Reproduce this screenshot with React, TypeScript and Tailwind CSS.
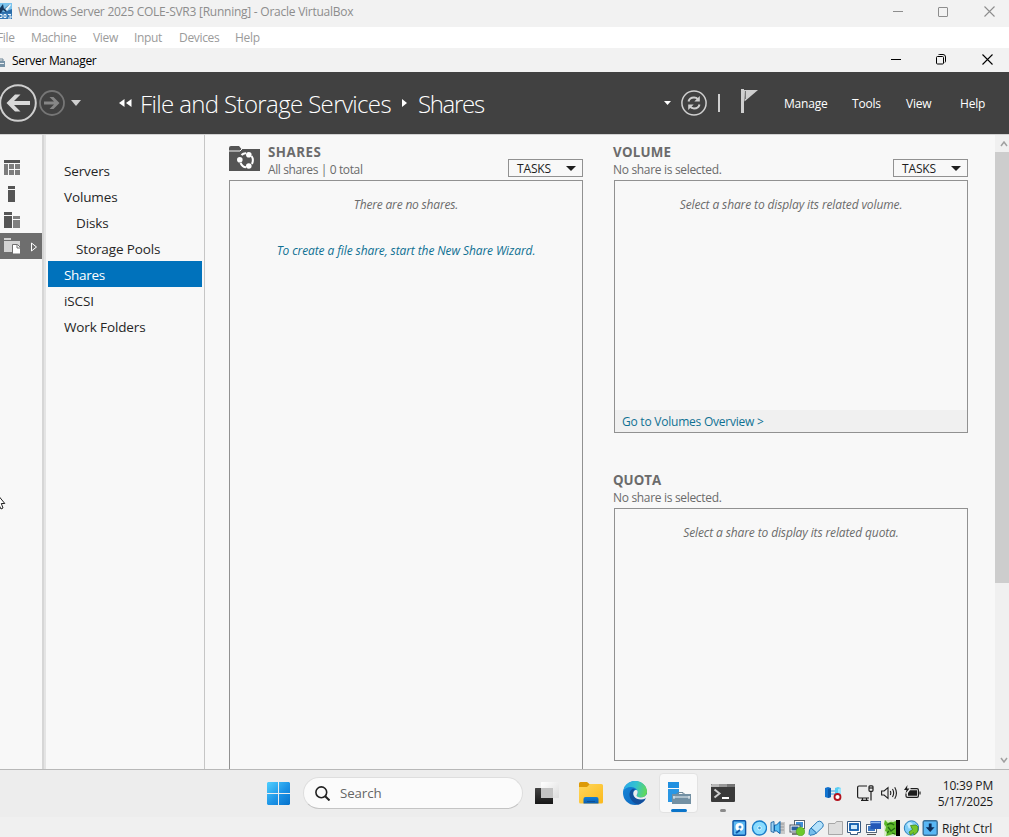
import React from "react";

type TextProps = { className?: string; children: React.ReactNode };

function T({ className = "", children }: TextProps) {
  return <span className={"block whitespace-nowrap " + className}>{children}</span>;
}

function Caret({ className = "" }: { className?: string }) {
  return (
    <svg className={className} viewBox="0 0 10 6" preserveAspectRatio="none" fill="currentColor">
      <path d="M0 0h10L5 6z" />
    </svg>
  );
}

function CloseGlyph() {
  return (
    <svg className="h-[11px] w-[11px]" viewBox="0 0 11 11" fill="none" stroke="currentColor" strokeWidth="1.1">
      <path d="M.5.5l10 10M10.5.5l-10 10" />
    </svg>
  );
}

function HostTitleBar() {
  return (
    <div className="flex h-[27px] items-start bg-[#f2f2f2] text-[#8d8d8d]">
      <svg className="mt-[3px] h-4 w-3 shrink-0" viewBox="0 0 12 16">
        <rect width="12" height="16" fill="#2b6ca8" />
        <path d="M0 0h12v6L4 9 0 8z" fill="#7cc4ee" />
        <path d="M0 5l3-4 1 5 6-5-4 8-3-2-3 4z" fill="#16385f" />
        <path d="M5 6l5-5 1 1-4 6z" fill="#e8f4fb" />
        <rect y="10" width="12" height="6" fill="#3478b5" />
        <path d="M0 11.500h2v3H0M4 11.500h2v3H4zM8 11.500h3M9 13h2v2H8" stroke="#e8f4fb" strokeWidth="1" fill="none" />
      </svg>
      <T className="ml-[6px] mt-[3px] text-[12px] leading-[18px] tracking-[-0.25px]">
        Windows Server 2025 COLE-SVR3 [Running] - Oracle VirtualBox
      </T>
      <div className="ml-auto mt-[6px] flex items-center pr-[14px]">
        <span className="mr-[35px] h-px w-[10px] bg-current" />
        <span className="mr-[36px] h-[10px] w-[10px] rounded-[1px] border border-current" />
        <CloseGlyph />
      </div>
    </div>
  );
}

function HostMenu() {
  return (
    <div className="flex h-[21px] bg-white text-[12px] leading-[22px] tracking-[-0.33px] text-[#9b9b9b]">
      <T className="-ml-[3px] w-[34px]">File</T>
      <T className="w-[62px]">Machine</T>
      <T className="w-[41px]">View</T>
      <T className="w-[45px]">Input</T>
      <T className="w-[56px]">Devices</T>
      <T>Help</T>
    </div>
  );
}

function AppTitleBar() {
  return (
    <div className="flex h-6 items-start bg-[#f2f2f2] text-black">
      <svg className="mt-[10px] h-[9px] w-[5px] shrink-0" viewBox="0 0 5 9">
        <path d="M0 1h3v2H0" fill="none" stroke="#6d8596" />
        <rect y="3" width="5" height="6" fill="#7893a6" />
        <path d="M0 5.500h4" stroke="#e9eef2" />
      </svg>
      <T className="ml-[7px] mt-[4px] text-[12px] leading-[18px] tracking-[-0.3px]">Server Manager</T>
      <div className="ml-auto mt-[6px] flex items-center pr-[16px]">
        <span className="mr-[35px] h-px w-[10px] bg-current" />
        <svg className="mr-[36px] h-[11px] w-[10px]" viewBox="0 0 10 11" fill="none" stroke="currentColor">
          <rect x=".5" y="2.500" width="7" height="7.500" rx="1" />
          <path d="M2.500 1Q2.500.5 3.500.5H7q2.500 0 2.500 2.500v4.500q0 .8-.8.800" />
        </svg>
        <CloseGlyph />
      </div>
    </div>
  );
}

function Header() {
  return (
    <div className="flex h-[63px] items-center border-b border-[#d2d2d2] bg-[#414141] text-white">
      <svg className="h-[40px] w-[38px] shrink-0" viewBox="0 0 38 40" fill="none">
        <circle cx="18" cy="20" r="17.800" stroke="#cfcfcf" strokeWidth="2" />
        <path d="M30 18v4H14l6.500 6.500h-5.500L6.500 20 15 11.500h5.500L14 18z" fill="#d8d8d8" />
      </svg>
      <svg className="ml-[1px] h-[26px] w-[26px] shrink-0" viewBox="0 0 26 26" fill="none">
        <circle cx="13" cy="13" r="12" stroke="#767676" strokeWidth="1.800" />
        <path d="M5 11.500v3h10l-4.500 4.500h4L20.500 13l-6-6h-4l4.500 4.500z" fill="#868686" />
      </svg>
      <Caret className="ml-[6px] h-[6px] w-[10px] text-[#cfcfcf]" />
      <svg className="ml-[38px] h-[8px] w-[13px]" viewBox="0 0 13 8" fill="#fff">
        <path d="M5.500 0v8L0 4zM12.500 0v8L7 4z" />
      </svg>
      <T className="ml-[8px] pt-[2px] text-[24px] font-light leading-[36px] tracking-[-0.63px]">File and Storage Services</T>
      <div className="flex flex-1 items-center">
        <svg className="ml-[11px] h-[8px] w-[5px]" viewBox="0 0 5 8" fill="#fff">
          <path d="M0 0v8l5-4z" />
        </svg>
        <T className="ml-[11px] pt-[2px] text-[24px] font-light leading-[36px] tracking-[-1.3px]">Shares</T>
      </div>
      <Caret className="h-[4px] w-[7px]" />
      <svg className="ml-[10px] h-[26px] w-[26px] shrink-0" viewBox="0 0 26 26" fill="none" stroke="#cfcfcf">
        <circle cx="13" cy="13" r="12.100" strokeWidth="1.500" />
        <path d="M7.500 11.500q1-4 5.500-4 2.500 0 4 1.800M18.500 14.500q-1 4-5.500 4-2.500 0-4-1.800" strokeWidth="2" />
        <path d="M18.800 6v5.500h-5.500zM7.200 20v-5.500h5.500z" fill="#cfcfcf" stroke="none" />
      </svg>
      <span className="ml-[11px] h-[18px] w-[2px] bg-[#cfcfcf]" />
      <svg className="mb-[5px] ml-[21px] h-[24px] w-[17px] shrink-0" viewBox="0 0 17 24" fill="#cfcfcf">
        <path d="M0 0h3v24H0z" />
        <path d="M3 1h14L3.500 12.500z" />
        <path d="M4.500 2v8" stroke="#777" strokeWidth="1" />
      </svg>
      <nav className="ml-[26px] flex pt-[2px] text-[12px] font-medium leading-[18px] tracking-[-0.2px]">
        <T className="w-[68px]">Manage</T>
        <T className="w-[54px]">Tools</T>
        <T className="w-[54px]">View</T>
        <T className="w-[49px]">Help</T>
      </nav>
    </div>
  );
}

function Rail() {
  return (
    <div className="w-[42px] shrink-0 pt-[20px]">
      <div className="flex h-[26px] items-center pb-px pl-[4px]">
        <svg className="h-[15px] w-4" viewBox="0 0 16 15" fill="#7d7d7d">
          <path d="M0 0h16v3H0z" fill="#555" />
          <path d="M0 4h4v11H0zM5 4h5v5H5zM11 4h5v5h-5zM5 10h5v5H5zM11 10h5v5h-5z" />
        </svg>
      </div>
      <div className="flex h-[26px] items-center pl-[8px]">
        <svg className="h-4 w-[7px]" viewBox="0 0 7 16" fill="#555">
          <path d="M0 0h7v3H0zM0 4h7v12H0z" />
        </svg>
      </div>
      <div className="flex h-[26px] items-center pl-[4px]">
        <svg className="h-4 w-4" viewBox="0 0 16 16" fill="#555">
          <path d="M0 0h8v3H0zM0 4h8v12H0z" />
          <path d="M9 4h7v3H9zM9 8h7v8H9z" fill="#808080" />
        </svg>
      </div>
      <div className="flex h-[26px] items-center bg-[#6e6e6e] pl-[4px]">
        <svg className="h-4 w-4" viewBox="0 0 16 16">
          <path d="M0 0h7v2H0zM0 3h16v11H0z" fill="#d3d3d3" />
          <path d="M8.500 6.500h5l3 3V16h-8z" fill="#fff" stroke="#6e6e6e" />
          <path d="M13 7v3h3" fill="none" stroke="#6e6e6e" />
        </svg>
        <svg className="ml-[11px] mt-[1px] h-[10px] w-[6px]" viewBox="0 0 6 10" fill="none" stroke="#fff">
          <path d="M.5 1v8l5-4z" />
        </svg>
      </div>
    </div>
  );
}

function SideNav() {
  return (
    <nav className="w-[159px] shrink-0 border-r border-[#c6c6c6] px-[2px] pt-[22px] text-[13.500px] leading-[28px] tracking-[-0.13px] text-[#262626]">
      <T className="h-[26px] pl-4">Servers</T>
      <T className="h-[26px] pl-4">Volumes</T>
      <T className="h-[26px] pl-[28px]">Disks</T>
      <T className="h-[26px] pl-[28px]">Storage Pools</T>
      <T className="h-[26px] bg-[#0072bc] pl-4 tracking-[-0.3px] text-white">Shares</T>
      <T className="h-[26px] pl-4">iSCSI</T>
      <T className="h-[26px] pl-4">Work Folders</T>
    </nav>
  );
}

function TasksButton() {
  return (
    <div className="ml-auto mt-[24px] flex h-[18px] w-[75px] border border-[#919191] pl-[8px] pr-[6px] text-[#1e1e1e]">
      <T className="text-[12px] leading-[18px] tracking-[-0.15px]">TASKS</T>
      <Caret className="ml-auto mt-[6px] h-[5px] w-[10px]" />
    </div>
  );
}

function SharesPanel() {
  return (
    <section className="flex w-[354px] shrink-0 flex-col">
      <div className="flex h-[45px]">
        <svg className="mt-[11px] h-[25px] w-[31px] shrink-0" viewBox="0 0 31 25">
          <path d="M0 2q0-2 2-2h8l2.500 3H31v22H0z" fill="#555" />
          <path d="M0 5h11l2-2" fill="none" stroke="#f8f8f8" />
          <g fill="none" stroke="#fff" strokeWidth="2">
            <path d="M12.500 9q2-2 4.500-1.800M22.500 10q2.500 3.500.5 8M11.500 17q2 4 5.500 4.300" />
          </g>
          <g fill="#fff">
            <circle cx="10.800" cy="13.700" r="2.800" />
            <circle cx="19.800" cy="8.700" r="2.800" />
            <circle cx="19.800" cy="20" r="2.800" />
          </g>
        </svg>
        <div className="ml-[8px] text-[#6b6b6b]">
          <T className="mt-[8px] text-[13.300px] font-bold leading-[18px] tracking-[0.5px]">SHARES</T>
          <T className="text-[12px] leading-[18px] tracking-[-0.38px]">All shares | 0 total</T>
        </div>
        <TasksButton />
      </div>
      <div className="flex flex-1 flex-col items-center border border-b-0 border-[#919191] pt-[15px] text-[12px] italic leading-[18px] text-[#6b6b6b]">
        <T className="tracking-[-0.18px]">There are no shares.</T>
        <T className="mt-[28px] tracking-[-0.1px] text-[#0f7093]">To create a file share, start the New Share Wizard.</T>
      </div>
    </section>
  );
}

function Empty({ children }: { children: React.ReactNode }) {
  return <T className="text-center text-[12px] italic leading-[18px] tracking-[-0.12px] text-[#6b6b6b]">{children}</T>;
}

function RightColumn() {
  return (
    <div className="ml-[30px] flex w-[355px] flex-col pl-px text-[#6b6b6b]">
      <section>
        <div className="flex h-[45px]">
          <div className="-ml-px">
            <T className="mt-[8px] text-[13.300px] font-bold leading-[18px] tracking-[0.25px]">VOLUME</T>
            <T className="text-[12px] leading-[18px] tracking-[-0.32px]">No share is selected.</T>
          </div>
          <TasksButton />
        </div>
        <div className="flex h-[253px] flex-col border border-[#919191] pt-[15px]">
          <Empty>Select a share to display its related volume.</Empty>
          <div className="mt-auto h-[22px] bg-[#f0f0f0] pl-[7px]">
            <T className="text-[12px] leading-[23px] tracking-[-0.23px] text-[#0f7093]">Go to Volumes Overview &gt;</T>
          </div>
        </div>
      </section>
      <section className="mt-[30px]">
        <div className="h-[45px] pt-[8px]">
          <T className="-ml-px text-[13.300px] font-bold leading-[18px]">QUOTA</T>
          <T className="-ml-px text-[12px] leading-[18px] tracking-[-0.32px]">No share is selected.</T>
        </div>
        <div className="h-[253px] border border-[#919191] pt-[15px]">
          <Empty>Select a share to display its related quota.</Empty>
        </div>
      </section>
    </div>
  );
}

function ScrollBar() {
  return (
    <div className="ml-auto flex w-[14px] shrink-0 flex-col items-center bg-[#f0f0f0] text-[#a0a0a0]">
      <svg className="ml-[3px] mt-[6px] h-[6px] w-[8px]" viewBox="0 0 8 6" fill="none" stroke="currentColor" strokeWidth="1.500">
        <path d="M1 5l3-4 3 4" />
      </svg>
      <span className="mt-[5px] h-[431px] w-full bg-[#cdcdcd]" />
      <svg className="mb-[6px] ml-[3px] mt-auto h-[6px] w-[8px]" viewBox="0 0 8 6" fill="none" stroke="currentColor" strokeWidth="1.500">
        <path d="M1 1l3 4 3-4" />
      </svg>
    </div>
  );
}

function Taskbar() {
  return (
    <div className="flex h-[48px] shrink-0 items-start border-t border-[#b8b8b8] bg-[#ededed]">
      <svg className="ml-[267px] mt-[12px] h-[23px] w-[23px] shrink-0" viewBox="0 0 23 23">
        <defs>
          <linearGradient id="win" gradientUnits="userSpaceOnUse" x1="0" y1="0" x2="23" y2="23">
            <stop offset="0" stopColor="#4fd0ff" />
            <stop offset=".55" stopColor="#1c93e6" />
            <stop offset="1" stopColor="#0672cb" />
          </linearGradient>
        </defs>
        <path d="M1 0h10v11H0V1zM12 0h10l1 1v10H12zM0 12h11v11H1l-1-1zM12 12h11v10l-1 1H12z" fill="url(#win)" />
      </svg>
      <div className="ml-[13px] mt-[7px] flex h-[32px] w-[220px] shrink-0 items-center rounded-full border border-[#dedede] border-b-[#c4c4c4] bg-[#fbfbfb]">
        <svg className="ml-[11px] h-[15px] w-[15px]" viewBox="0 0 15 15" fill="none" stroke="#222" strokeWidth="1.600">
          <circle cx="6.300" cy="6.300" r="5.400" />
          <path d="M10.200 10.200l4.300 4.300" strokeWidth="2" />
        </svg>
        <T className="ml-[10px] text-[13.300px] leading-[18px] tracking-[-0.1px] text-[#666]">Search</T>
      </div>
      <svg className="ml-[12px] mt-[12px] h-[22px] w-[24px] shrink-0" viewBox="0 0 24 22">
        <defs>
          <linearGradient id="tvd" x1="0" y1="0" x2="0" y2="1">
            <stop offset="0" stopColor="#444" />
            <stop offset="1" stopColor="#161616" />
          </linearGradient>
          <linearGradient id="tvl" x1="0" y1="0" x2="1" y2="1">
            <stop offset="0" stopColor="#fff" />
            <stop offset="1" stopColor="#dcdcdc" />
          </linearGradient>
        </defs>
        <rect y="6" width="18" height="16" rx=".5" fill="url(#tvd)" />
        <rect x="6" width="18" height="16" rx=".5" fill="url(#tvl)" />
        <rect x="6" y="6" width="12" height="10" fill="#c3c3c3" />
      </svg>
      <svg className="ml-[20px] mt-[12px] h-[22px] w-[24px] shrink-0" viewBox="0 0 24 22">
        <defs>
          <linearGradient id="fold" x1="0" y1="0" x2="1" y2="1">
            <stop offset="0" stopColor="#ffd75c" />
            <stop offset="1" stopColor="#fbb91c" />
          </linearGradient>
          <linearGradient id="foldb" x1="0" y1="0" x2="0" y2="1">
            <stop offset="0" stopColor="#1280d8" />
            <stop offset="1" stopColor="#0a5cae" />
          </linearGradient>
        </defs>
        <path d="M0 1.500Q0 0 1.500 0H8l3 2.500L9 6H0z" fill="#dd9a08" />
        <path d="M0 5h8l3-3h11.500Q24 2 24 3.500V20q0 1.500-1.500 1.500h-21Q0 21.500 0 20z" fill="url(#fold)" />
        <path d="M4.500 21.500V17q0-2 2-2h11q2 0 2 2v4.500z" fill="url(#foldb)" />
        <path d="M8 19.500h8" stroke="#0c4f96" />
      </svg>
      <svg className="ml-[20px] mt-[11px] h-[24px] w-[24px] shrink-0" viewBox="0 0 24 24">
        <defs>
          <linearGradient id="eg1" x1="0" y1=".3" x2="1" y2=".5">
            <stop offset="0" stopColor="#2aa8e8" />
            <stop offset=".5" stopColor="#33c3d0" />
            <stop offset="1" stopColor="#62d957" />
          </linearGradient>
          <linearGradient id="eg2" x1="0" y1="0" x2="1" y2="1">
            <stop offset="0" stopColor="#1689dc" />
            <stop offset="1" stopColor="#0c60b8" />
          </linearGradient>
        </defs>
        <circle cx="12" cy="12" r="12" fill="url(#eg2)" />
        <path d="M.4 9.500C1.500 4 6.200 0 12 0c7 0 12 5 12 10.500 0 4-3 6-6.200 6-2.800 0-4.200-1-4.200-1.900 0-.7 1.200-1 1.200-3C14.800 9 12 6 8 6 4 6 1.500 8 .4 9.500z" fill="url(#eg1)" />
        <path d="M9.800 7.800C6.800 9.500 5.800 13 7 16.500c1.300 3.800 5 6.500 8.500 6.900 3-.8 5.700-3 7-5.700.2-.5-.2-.7-.6-.5-3.700 1.800-9 1-11-2.200-1.500-2.500-.7-5.500 1-6.500-.7-.9-1.500-1-2.100-.7z" fill="#124f9c" />
        <path d="M14.600 10c.5 2.600-1 3.600-1 4.600 0 .9 1.400 1.900 4.200 1.900 2.600 0 4.600-1 6.200-3.500v4l-1.500.5c-4 2-9.500 1-11.500-2.300-1.300-2.300-.8-5 .9-6 1.300-.5 2.300-.2 2.700.8z" fill="#ededed" />
      </svg>
      <div className="ml-[12px] mt-[3px] flex h-[40px] w-[39px] shrink-0 flex-col items-center justify-end rounded-[4px] border border-[#e2e2e2] bg-[#f9f9f9]">
        <svg className="mb-[4px] h-[24px] w-[24px]" viewBox="0 0 24 24">
          <path d="M1 1h11v6H1z" fill="#1f8fe0" />
          <path d="M1 8h11v5H6v8H1z" fill="#2a97e4" />
          <path d="M9 13h2v-1.500h5V13h2" fill="none" stroke="#6d8796" />
          <rect x="5" y="13" width="19" height="10" fill="#7390a3" />
          <path d="M6 16h17M7 15v3M22 15v3" stroke="#e9f1f5" />
        </svg>
        <span className="h-[3px] w-4 rounded-full bg-[#0a74c9]" />
      </div>
      <div className="ml-[13px] mt-[14px] flex w-[24px] flex-col items-center">
        <svg className="h-[18px] w-[24px]" viewBox="0 0 24 18">
          <rect width="24" height="18" rx="1" fill="#3a3a3a" />
          <path d="M1 0h7v3H0V1z" fill="#b8b8b8" />
          <path d="M8 0h8v3H8z" fill="#989898" />
          <path d="M16 0h7l1 1v2h-8z" fill="#757575" />
          <path d="M3.500 5.500l5 4-5 4" fill="none" stroke="#cfcfcf" strokeWidth="2" />
          <path d="M11 14h7" stroke="#fff" strokeWidth="2" />
        </svg>
        <span className="mt-[7px] h-[3px] w-[6px] rounded-full bg-[#8b8b8b]" />
      </div>
      <svg className="ml-[90px] mt-[16px] h-[16px] w-[17px] shrink-0" viewBox="0 0 17 16">
        <path d="M0 2l3-1 3 1v9l-3 1-3-1z" fill="#1173cf" />
        <path d="M3 3l3-1v9l-3 1z" fill="#0b5aac" />
        <path d="M6 5h5M6 8h4" stroke="#3a9ede" />
        <path d="M10 2l3-1 3 1v8h-6z" fill="#58cdf3" />
        <path d="M13 3l3-1v8h-3z" fill="#9be4fb" />
        <circle cx="12.500" cy="11" r="3" fill="#fff" stroke="#b3121d" strokeWidth="1.800" />
      </svg>
      <svg className="ml-[15px] mt-[15px] h-[16px] w-[17px] shrink-0" viewBox="0 0 17 16" fill="none" stroke="#1e1e1e" strokeWidth="1.200">
        <path d="M10 1H2Q.6 1 .6 2.500v9Q.6 13 2 13h10M5.500 13v2.500M9.500 13v2.500M4 15.400h7.500M14 6.500v9" />
        <rect x="12" y=".8" width="4" height="5.500" rx="1" />
        <path d="M12 3h4" />
      </svg>
      <svg className="ml-[7px] mt-[16px] h-[14px] w-[17px] shrink-0" viewBox="0 0 17 14" fill="none" stroke="#1e1e1e" strokeWidth="1.100">
        <path d="M.6 5v4h2.500L7 12.300V1.700L3.100 5zM9.300 5q1 2 0 4M11.500 3q2.300 4 0 8M13.700 1.200q3.500 5.800 0 11.600" />
      </svg>
      <svg className="ml-[6px] mt-[15px] h-[14px] w-[17px] shrink-0" viewBox="0 0 17 14" fill="none" stroke="#1e1e1e" strokeWidth="1.200">
        <path d="M6.500 3.600H13q1.400 0 1.400 1.400v6q0 1.400-1.400 1.400H3.500Q2 12.400 2 11V8.500M16 6.500v3" />
        <path d="M6 5.200h7v5.600H4V8z" fill="#1e1e1e" stroke="none" />
        <path d="M3.500 0L0 5h2.500L1.500 8.500 5.500 3.500H3z" fill="#1e1e1e" stroke="none" />
      </svg>
      <div className="ml-auto mr-[16px] mt-[8px] flex flex-col items-end text-[12px] leading-4 tracking-[-0.18px] text-[#1b1b1b]">
        <T>10:39 PM</T>
        <T>5/17/2025</T>
      </div>
    </div>
  );
}

function StatusStrip() {
  return (
    <div className="flex h-[20px] shrink-0 items-center bg-[#f0f0f0] pl-[732px] pt-[2px]">
      <div className="flex gap-[3px]">
        <svg className="h-4 w-4" viewBox="0 0 16 16">
          <rect x="1" y=".7" width="12.600" height="14.600" rx="1" fill="#5cb8f2" stroke="#0d56a8" strokeWidth="1.400" />
          <circle cx="7.500" cy="7" r="4" fill="#fff" />
          <circle cx="8" cy="7" r="1.500" fill="#3a8ad0" />
          <path d="M4 13l4-3" stroke="#0d56a8" strokeWidth="2" />
        </svg>
        <svg className="h-4 w-4" viewBox="0 0 16 16">
          <circle cx="8.500" cy="8" r="7" fill="#8adcff" stroke="#1b7fca" strokeWidth="1.400" />
          <circle cx="8.500" cy="8" r="1.800" fill="#3f9fd8" stroke="#d8f4ff" />
        </svg>
        <svg className="h-4 w-4" viewBox="0 0 16 16">
          <path d="M9 2h6v12H9z" fill="#c8c8c8" />
          <path d="M10 4h4M10 7h4M10 10h4" stroke="#9a9a9a" />
          <path d="M1 2.500l3-1v11l-3-1z" fill="#9ed3f4" stroke="#2e6fa8" />
          <path d="M4.500 5h2L10 1.500v12L6.500 11h-2z" fill="#5cc0f3" stroke="#0f62aa" />
        </svg>
        <svg className="h-4 w-4" viewBox="0 0 16 16">
          <rect x="5.500" y=".5" width="10" height="8" fill="#fff" stroke="#5a6670" />
          <rect x="7" y="2" width="7" height="5" fill="#3f8fd6" />
          <rect x="1" y="5" width="10" height="7" fill="#fff" stroke="#4a5866" />
          <rect x="2.500" y="6.500" width="7" height="4" fill="#2a5f9c" />
          <path d="M3 14h6" stroke="#555" strokeWidth="1.500" />
          <circle cx="11.500" cy="11.500" r="4.300" fill="#6cc82c" stroke="#489b17" strokeWidth=".6" />
        </svg>
        <svg className="h-4 w-4" viewBox="0 0 16 16">
          <path d="M3 8L9.500 1.700q2.300-1.500 4.500.7t.8 4.600L8.500 13z" fill="#b5e2fb" stroke="#2a7ab8" />
          <path d="M3 8l5.500 5L6 14.500l-4 .8-1-1L1.500 10z" fill="#76bdea" stroke="#2a7ab8" />
        </svg>
        <svg className="h-4 w-4" viewBox="0 0 16 16" fill="#dedede" stroke="#a7a7a7">
          <path d="M1.500 14.500v-11L8 3.500 9.500 1.500h6v13z" />
        </svg>
        <svg className="h-4 w-4" viewBox="0 0 16 16">
          <path d="M1.500 1.500h13v11h-3v2h-7v-2h-3z" fill="#fff" stroke="#385a80" />
          <rect x="4" y="4" width="8" height="6" fill="#cde9fb" stroke="#0e5cae" strokeWidth="1.800" />
        </svg>
        <svg className="h-4 w-4" viewBox="0 0 16 16">
          <rect x="1.500" y="4.500" width="10" height="8" fill="#fff" stroke="#59687a" />
          <rect x="3" y="6" width="7" height="5" fill="#3c77c4" />
          <path d="M2 14.500h9" stroke="#555" />
          <rect x="5.500" y="1" width="10.500" height="8" fill="#2458b8" />
          <path d="M6 2.500h9.500" stroke="#8fb6f0" strokeWidth="1.500" />
        </svg>
        <svg className="h-4 w-4" viewBox="0 0 16 16">
          <rect width="16" height="16" fill="#d9ecc8" />
          <rect x="12" width="4" height="16" fill="#000" />
          <path d="M1 0l3 3q3-2 5-1l3-1v14l-3-1-3 1-4 1 1-4-2-1 1-4-2-3z" fill="#5cb829" />
          <path d="M3 5q4-3 7 0M4 7l3 4 4-3M3 13l2-2M8 13l3 1" stroke="#226b10" strokeWidth="1.300" fill="none" />
        </svg>
        <svg className="h-4 w-4" viewBox="0 0 16 16">
          <circle cx="8.500" cy="8" r="7.200" fill="#7fcdf7" stroke="#2b7fbc" />
          <path d="M4 4l3-2 3 2-4 5z" fill="#c4ebff" />
          <path d="M7.500 5.500l5.500-.5 2 2-.5 5-3.500 3-.5-2.500L7.500 15 6 12l3.500-2.500z" fill="#75c52c" stroke="#438a17" strokeWidth=".8" />
        </svg>
        <svg className="h-4 w-4" viewBox="0 0 16 16">
          <rect x="1.200" y=".7" width="14" height="14.600" rx="1.500" fill="#58b7f5" stroke="#3a7099" strokeWidth="1.400" />
          <path d="M6.800 3.500h2.800v3.800h3L8.200 12 3.800 7.300h3z" fill="#0c2d58" />
        </svg>
      </div>
      <T className="ml-[4px] pt-px text-[12px] leading-[16px] tracking-[-0.14px] text-[#1c1c1c]">Right Ctrl</T>
    </div>
  );
}

export default function App() {
  return (
    <div className="relative flex h-[837px] w-[1009px] flex-col overflow-hidden bg-[#f8f8f8] font-['Open_Sans','Noto_Sans',sans-serif]">
      <HostTitleBar />
      <HostMenu />
      <AppTitleBar />
      <Header />
      <main className="flex min-h-0 flex-1">
        <Rail />
        <div className="w-[4px] shrink-0 border-r-2 border-[#e4e4e4] bg-[#d6d6d6]" />
        <SideNav />
        <div className="flex flex-1 pl-[24px]">
          <SharesPanel />
          <RightColumn />
          <ScrollBar />
        </div>
      </main>
      <Taskbar />
      <StatusStrip />
      <svg className="absolute left-0 top-[496px] h-[14px] w-[6px]" viewBox="0 0 6 14" fill="#fff" stroke="#222">
        <path d="M-3-2L4.800 7.500H1.300L3 12 1 13-1 9" />
      </svg>
    </div>
  );
}
